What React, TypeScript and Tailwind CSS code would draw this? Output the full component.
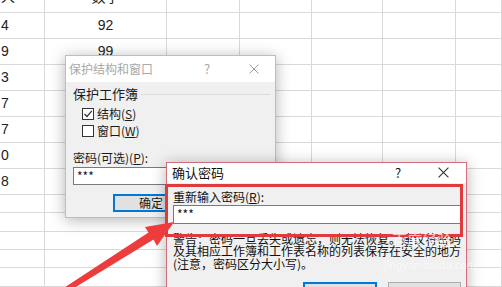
import React from 'react'

const colW = ['w-[45px]', 'w-[122px]', 'w-[73px]', 'w-[72px]', 'w-[71px]', 'w-[73px]', 'flex-1']

const rows: { h: string; a?: string; b?: string; head?: boolean }[] = [
  { h: 'h-[13px]', a: '人', b: '数字', head: true },
  { h: 'h-[26px]', a: '4', b: '92' },
  { h: 'h-[26px]', a: '9', b: '99' },
  { h: 'h-[26px]', a: '3' },
  { h: 'h-[26px]', a: '7' },
  { h: 'h-[26px]', a: '7' },
  { h: 'h-[26px]', a: '0' },
  { h: 'h-[26px]', a: '8' },
  { h: 'h-[18px]' },
  { h: 'h-[19px]' },
  { h: 'h-[18px]' },
  { h: 'h-[18px]' },
  { h: 'h-[19px]' }
]

const cjk = "font-['Noto_Sans_CJK_SC','Noto_Sans',sans-serif]"

function CloseIcon({ className }: { className?: string }) {
  return (
    <svg viewBox="0 0 10 10" className={className} fill="none" stroke="currentColor" strokeWidth="1">
      <path d="M0.5 0.5 L9.5 9.5 M9.5 0.5 L0.5 9.5" />
    </svg>
  )
}

function Checkbox({ checked }: { checked?: boolean }) {
  return (
    <span className="w-[12px] h-[12px] border border-[#333] bg-white flex items-center justify-center">
      {checked && (
        <svg viewBox="0 0 10 10" className="w-[10px] h-[10px]" fill="none" stroke="#333" strokeWidth="1.2">
          <path d="M1.5 5 L4 7.5 L8.8 1.8" />
        </svg>
      )}
    </span>
  )
}

function Sheet() {
  return (
    <div className="flex flex-col">
      {rows.map((r, i) => (
        <div key={i} className={`flex ${r.h}`}>
          {colW.map((w, j) => (
            <div
              key={j}
              className={`${w} shrink-0 border-r border-b border-[#d9d9d9] overflow-hidden flex items-center text-[14px] text-[#222] font-['Liberation_Sans','Noto_Sans_CJK_SC',sans-serif] ${
                j === 1 ? 'justify-center' : 'pl-[1px]'
              }`}
            >
              {j === 0 && r.a && <span className={r.head ? '-mt-[17px]' : ''}>{r.a}</span>}
              {j === 1 && r.b && <span className={r.head ? '-mt-[17px]' : ''}>{r.b}</span>}
            </div>
          ))}
        </div>
      ))}
    </div>
  )
}

function ProtectDialog() {
  return (
    <div className={`absolute left-[65px] top-[55px] w-[211px] h-[163px] bg-[#f0f0f0] border border-[#bdbdbd] shadow-[0_2px_14px_rgba(0,0,0,0.3)] flex flex-col text-[12px] ${cjk}`}>
      <div className="h-[26px] bg-white flex items-center pl-[3px] text-[#a8a8a8]">
        <span className="flex-1">保护结构和窗口</span>
        <span className="w-[8px] text-center text-[13px]">?</span>
        <CloseIcon className="w-[10px] h-[10px] ml-[38px] mr-[16px] text-[#9a9a9a]" />
      </div>
      <div className="flex flex-col pl-[7px] text-[#1a1a1a]">
        <div className="mt-[4px] h-[16px] flex items-center">
          <span className="leading-[16px] text-[13px]">保护工作簿</span>
          <span className="flex-1 h-px bg-[#dcdcdc] ml-[3px] mr-[5px]" />
        </div>
        <div className="mt-[3px] h-[17px] flex items-center gap-[3px] pl-[9px]">
          <Checkbox checked />
          <span>结构(<span className="underline">S</span>)</span>
        </div>
        <div className="h-[17px] flex items-center gap-[3px] pl-[9px]">
          <Checkbox />
          <span>窗口(<span className="underline">W</span>)</span>
        </div>
        <div className="mt-[11px] h-[16px] leading-[16px]">密码(可选)(<span className="underline">P</span>):</div>
        <div className="mt-[1px] h-[18px] w-[196px] bg-white border border-[#7a7a7a] flex items-center pl-[3px] text-[12px] leading-none">
          ***
        </div>
        <div className="mt-[9px] ml-[40px] h-[18px] w-[76px] bg-[#e1e1e1] border-2 border-[#0078d7] flex items-center justify-center">
          确定
        </div>
      </div>
    </div>
  )
}

function ConfirmDialog() {
  return (
    <div className={`absolute left-[166px] top-[162px] w-[301px] h-[140px] bg-[#f0f0f0] border border-[#d0707e] shadow-[0_2px_14px_rgba(0,0,0,0.3)] flex flex-col text-[12px] text-[#111] ${cjk}`}>
      <div className="h-[23px] bg-white flex items-center pl-[5px] text-[13px]">
        <span className="flex-1">确认密码</span>
        <span className="w-[8px] text-center text-[13px]">?</span>
        <CloseIcon className="w-[11px] h-[11px] ml-[36px] mr-[17px] text-[#333]" />
      </div>
      <div className="flex flex-col pl-[6px]">
        <div className="mt-[6px] h-[16px] leading-[16px]">重新输入密码(<span className="underline">R</span>):</div>
        <div className="h-[19px] w-[288px] bg-white border border-[#7a7a7a] flex items-center pl-[3px] leading-none">
          ***
        </div>
        <div className="mt-[9px] leading-[12.5px] whitespace-nowrap">
          <div>警告：密码一旦丢失或遗忘，则无法恢复。建议将密码</div>
          <div>及其相应工作簿和工作表名称的列表保存在安全的地方</div>
          <div>(注意，密码区分大小写)。</div>
        </div>
        <div className="mt-[12px] flex">
          <div className="ml-[130px] w-[74px] h-[22px] bg-[#e1e1e1] border-2 border-[#0078d7]" />
          <div className="ml-[11px] w-[73px] h-[22px] bg-[#e1e1e1] border border-[#adadad]" />
        </div>
      </div>
    </div>
  )
}

export default function App() {
  return (
    <div className="relative w-[502px] h-[287px] overflow-hidden bg-white">
      <Sheet />
      <ProtectDialog />
      <ConfirmDialog />

      {/* highlight box */}
      <div className="absolute left-[165px] top-[184px] w-[298px] h-[53px] border-[3px] border-[#e0393e]" />

      {/* watermark */}
      <div className={`absolute left-[392px] top-[229px] text-[15px] text-white/70 ${cjk}`}>百度经验</div>
      <div className="absolute left-[384px] top-[258px] text-[10px] text-white/60 font-['DejaVu_Sans',sans-serif]">
        jingyan.baidu.com
      </div>

      {/* arrow */}
      <svg className="absolute inset-0 pointer-events-none" width="502" height="287" viewBox="0 0 502 287">
        <polygon
          points="174,222 157,246 153.5,239.5 67.5,292 64.5,287.5 148.5,232.5 145,227"
          fill="#ee3b3b"
        />
      </svg>
    </div>
  )
}
